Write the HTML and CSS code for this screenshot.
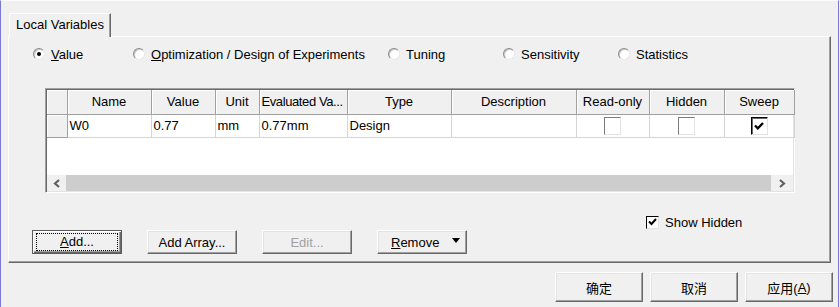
FILE: index.html
```html
<!DOCTYPE html>
<html lang="en">
<head>
    <meta charset="UTF-8">
    <title>Local Variables</title>
    <link rel="stylesheet" href="styles.css">
</head>
<body>
    <div class="window">
        <div class="tabs">
            <div class="tab">Local Variables</div>
        </div>
        <div class="panel">
            <div class="modes">
                <label class="radio-item"><span class="radio checked"></span><span><u>V</u>alue</span></label>
                <label class="radio-item"><span class="radio"></span><span><u>O</u>ptimization / Design of Experiments</span></label>
                <label class="radio-item"><span class="radio"></span><span>Tuning</span></label>
                <label class="radio-item"><span class="radio"></span><span>Sensitivity</span></label>
                <label class="radio-item"><span class="radio"></span><span>Statistics</span></label>
            </div>

            <div class="grid">
                <table class="vars">
                    <colgroup>
                        <col style="width:20px">
                        <col style="width:84px">
                        <col style="width:64px">
                        <col style="width:44px">
                        <col style="width:88px">
                        <col style="width:104px">
                        <col style="width:125px">
                        <col style="width:73px">
                        <col style="width:75px">
                        <col style="width:70px">
                    </colgroup>
                    <thead>
                        <tr>
                            <th></th>
                            <th>Name</th>
                            <th>Value</th>
                            <th>Unit</th>
                            <th class="clip">Evaluated Va...</th>
                            <th>Type</th>
                            <th>Description</th>
                            <th>Read-only</th>
                            <th>Hidden</th>
                            <th>Sweep</th>
                        </tr>
                    </thead>
                    <tbody>
                        <tr>
                            <td class="row-head"></td>
                            <td>W0</td>
                            <td>0.77</td>
                            <td>mm</td>
                            <td>0.77mm</td>
                            <td>Design</td>
                            <td></td>
                            <td class="center"><span class="cell-check"></span></td>
                            <td class="center"><span class="cell-check"></span></td>
                            <td class="center"><span class="cell-check on">
                                <svg width="10" height="8" viewBox="0 0 10 8"><path d="M1 3.5 L3.8 6.3 L9 1" stroke="#000" stroke-width="2.3" fill="none"/></svg>
                            </span></td>
                        </tr>
                    </tbody>
                </table>
                <div class="scrollbar">
                    <div class="arrow">
                        <svg width="8" height="9" viewBox="0 0 8 9"><path d="M6 1 L2 4.5 L6 8" stroke="#606060" stroke-width="2.2" fill="none"/></svg>
                    </div>
                    <div class="track"></div>
                    <div class="arrow right">
                        <svg width="8" height="9" viewBox="0 0 8 9"><path d="M2 1 L6 4.5 L2 8" stroke="#606060" stroke-width="2.2" fill="none"/></svg>
                    </div>
                </div>
            </div>

            <div class="show-hidden">
                <span class="small-check">
                    <svg width="9" height="8" viewBox="0 0 9 8"><path d="M1 3.5 L3.5 6 L8 1" stroke="#000" stroke-width="2" fill="none"/></svg>
                </span>
                <span>Show Hidden</span>
            </div>

            <div class="actions">
                <button class="btn default"><span class="focus"><u>A</u>dd...</span></button>
                <button class="btn">Add Array...</button>
                <button class="btn disabled">Edit...</button>
                <button class="btn split"><span><u>R</u>emove</span><span class="caret"></span></button>
            </div>
        </div>

        <div class="footer">
            <button class="btn big">确定</button>
            <button class="btn big">取消</button>
            <button class="btn big">应用(<u>A</u>)</button>
        </div>
    </div>
</body>
</html>
```

FILE: styles.css
```css
body {
    margin: 0;
    background: #f0f0f0;
    font-family: "Liberation Sans", "Noto Sans CJK SC", sans-serif;
    font-size: 13px;
    color: #000;
}
.window {
    width: 837px;
    height: 306px;
    border-left: 1px solid #7a7ad6;
    border-right: 1px solid #7a7ad6;
    border-top: 1px solid #fbfbfb;
    background: #f0f0f0;
}
.tabs {
    display: flex;
    padding-left: 8px;
    margin-top: 12px;
}
.tab {
    width: 102px;
    height: 24px;
    line-height: 22px;
    padding-left: 6px;
    box-sizing: border-box;
    border-top: 1px solid #fff;
    border-left: 1px solid #fff;
    border-right: 1px solid #696969;
    box-shadow: inset -1px 0 0 #a0a0a0;
    position: relative;
    z-index: 1;
    background: #f0f0f0;
    margin-bottom: -1px;
}
.panel {
    margin-left: 7px;
    width: 823px;
    height: 227px;
    box-sizing: border-box;
    border-top: 1px solid #fff;
    border-left: 1px solid #fff;
    border-right: 1px solid #696969;
    border-bottom: 1px solid #696969;
    box-shadow: inset -1px -1px 0 #a0a0a0;
    display: flex;
    flex-direction: column;
}
.modes {
    display: grid;
    grid-template-columns: 100px 255px 115px 115px auto;
    margin-top: 9px;
    padding-left: 24px;
    height: 16px;
    align-items: center;
}
.radio-item {
    display: flex;
    align-items: center;
    gap: 5px;
}
.radio {
    width: 10px;
    height: 10px;
    border-radius: 50%;
    border: 1px solid;
    border-color: #8a8a8a #e8e8e8 #e8e8e8 #8a8a8a;
    background: #fff;
    box-shadow: inset 1px 1px 0 #c8c8c8;
    position: relative;
    margin-right: 1px;
}
.radio.checked::after {
    content: "";
    position: absolute;
    left: 3px;
    top: 3px;
    width: 4px;
    height: 4px;
    border-radius: 50%;
    background: #000;
}
.grid {
    margin-top: 26px;
    margin-left: 36px;
    width: 750px;
    height: 105px;
    box-sizing: border-box;
    border: 1px solid;
    border-color: #a0a0a0 #fff #fff #a0a0a0;
    box-shadow: inset 1px 1px 0 #696969, inset -1px -1px 0 #e3e3e3;
    background: #fff;
    display: flex;
    flex-direction: column;
    padding: 1px;
}
.vars {
    border-collapse: collapse;
    table-layout: fixed;
    width: 747px;
}
.vars th {
    font-weight: normal;
    height: 22px;
    padding: 0 0 2px;
    background: #f0f0f0;
    border-right: 1px solid #a0a0a0;
    border-bottom: 1px solid #a0a0a0;
    box-shadow: inset 1px 1px 0 #fff;
    text-align: center;
    white-space: nowrap;
    overflow: hidden;
}
.vars th.clip {
    text-align: left;
    padding-left: 2px;
    letter-spacing: -0.4px;
}
.vars td {
    height: 20px;
    padding: 0 0 2px 2px;
    border-right: 1px solid #d4d4d4;
    border-bottom: 1px solid #d4d4d4;
}
.vars td.row-head {
    background: #f0f0f0;
    border-right: 1px solid #a0a0a0;
    border-bottom: 1px solid #a0a0a0;
    box-shadow: inset 1px 1px 0 #fff;
}
.vars td.center {
    text-align: center;
    padding: 0;
    height: 22px;
}
.cell-check {
    display: inline-flex;
    align-items: center;
    justify-content: center;
    width: 17px;
    height: 18px;
    box-sizing: border-box;
    border: 1px solid;
    border-color: #7a7a7a #e3e3e3 #e3e3e3 #7a7a7a;
    background: #fff;
    vertical-align: middle;
}
.cell-check.on {
    border-color: #000 #e3e3e3 #e3e3e3 #000;
    box-shadow: inset 1px 1px 0 #696969;
}
.scrollbar {
    margin-top: auto;
    height: 16px;
    display: flex;
}
.arrow {
    width: 19px;
    display: flex;
    align-items: center;
    justify-content: center;
    background: #f0f0f0;
}
.arrow.right {
    width: 22px;
}
.track {
    flex: 1;
    background: #cdcdcd;
}
.show-hidden {
    display: flex;
    align-items: center;
    gap: 6px;
    margin-top: 22px;
    padding-left: 637px;
    height: 14px;
}
.small-check {
    width: 13px;
    height: 13px;
    box-sizing: border-box;
    border: 1px solid;
    border-color: #000 #e3e3e3 #e3e3e3 #000;
    background: #fff;
    display: flex;
    align-items: center;
    justify-content: center;
}
.actions {
    display: flex;
    gap: 25px;
    margin-top: 1px;
    padding-left: 23px;
}
.btn {
    font-family: inherit;
    font-size: 13px;
    width: 90px;
    height: 24px;
    padding: 0;
    background: #f0f0f0;
    color: #000;
    border: 1px solid;
    border-color: #fff #696969 #696969 #fff;
    box-shadow: inset -1px -1px 0 #a0a0a0, inset 1px 1px 0 #e3e3e3;
    display: flex;
    align-items: center;
    justify-content: center;
}
.btn.default {
    border: 1px solid #5a5a5a;
    box-shadow: inset 1px 1px 0 #fff, inset -1px -1px 0 #696969, inset -2px -2px 0 #a0a0a0;
}
.focus {
    width: 80px;
    height: 16px;
    line-height: 16px;
    outline: 1px dotted #000;
}
.btn.disabled {
    color: #a0a0a0;
}
.btn.split {
    justify-content: space-between;
    padding: 0 6px 0 13px;
}
.caret {
    width: 0;
    height: 0;
    border-left: 4px solid transparent;
    border-right: 4px solid transparent;
    border-top: 5px solid #000;
    margin-top: -4px;
}
.footer {
    display: flex;
    justify-content: flex-end;
    gap: 7px;
    margin-top: 9px;
    padding-right: 5px;
}
.btn.big {
    width: 88px;
    height: 30px;
    font-size: 13px;
}
```
